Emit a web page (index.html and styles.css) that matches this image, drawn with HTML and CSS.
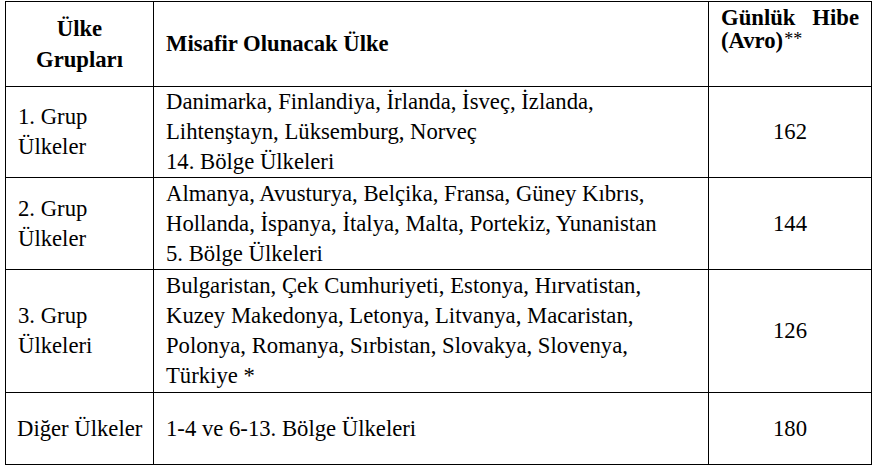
FILE: index.html
```html
<!DOCTYPE html>
<html lang="tr">
<head>
<meta charset="utf-8">
<link rel="stylesheet" href="styles.css">
</head>
<body>
<div class="page">
<table class="grant">
  <colgroup>
    <col class="c1">
    <col class="c2">
    <col class="c3">
  </colgroup>
  <tr class="r-head">
    <th class="h-group">Ülke<br>Grupları</th>
    <th class="h-country">Misafir Olunacak Ülke</th>
    <th class="h-amount"><span class="just">Günlük Hibe</span>(Avro)<span class="ast">**</span></th>
  </tr>
  <tr class="r1">
    <td class="group">1. Grup<br>Ülkeler</td>
    <td class="countries">Danimarka, Finlandiya, İrlanda, İsveç, İzlanda,<br>Lihtenştayn, Lüksemburg, Norveç<br>14. Bölge Ülkeleri</td>
    <td class="amount">162</td>
  </tr>
  <tr class="r2">
    <td class="group">2. Grup<br>Ülkeler</td>
    <td class="countries">Almanya, Avusturya, Belçika, Fransa, Güney Kıbrıs,<br>Hollanda, İspanya, İtalya, Malta, Portekiz, Yunanistan<br>5. Bölge Ülkeleri</td>
    <td class="amount">144</td>
  </tr>
  <tr class="r3">
    <td class="group">3. Grup<br>Ülkeleri</td>
    <td class="countries">Bulgaristan, Çek Cumhuriyeti, Estonya, Hırvatistan,<br>Kuzey Makedonya, Letonya, Litvanya, Macaristan,<br>Polonya, Romanya, Sırbistan, Slovakya, Slovenya,<br>Türkiye *</td>
    <td class="amount">126</td>
  </tr>
  <tr class="r4">
    <td class="group nowrap">Diğer Ülkeler</td>
    <td class="countries">1-4 ve 6-13. Bölge Ülkeleri</td>
    <td class="amount">180</td>
  </tr>
</table>
</div>
</body>
</html>
```
FILE: styles.css
```css
html, body {
  margin: 0;
  padding: 0;
  background: #fff;
}
.page {
  padding: 1px 0 0 5px;
}
.grant {
  border-collapse: collapse;
  table-layout: fixed;
  width: 866px;
  font-family: "Liberation Serif", "Times New Roman", serif;
  font-size: 22.7px;
  line-height: 30px;
  color: #000;
}
.c1 { width: 148px; }
.c2 { width: 555px; }
.c3 { width: 163px; }
.grant th, .grant td {
  border: 1px solid #000;
  padding: 0 12px;
  vertical-align: middle;
}
.grant th {
  font-weight: bold;
  text-align: left;
}
.r-head { height: 85px; }
.r1 { height: 91px; }
.r2 { height: 92px; }
.r3 { height: 123px; }
.r4 { height: 72px; }
.grant th.h-group {
  text-align: center;
  line-height: 31px;
  padding: 0 4px;
}
.grant th.h-amount {
  vertical-align: top;
  line-height: 23px;
  padding-top: 4px;
}
.just {
  display: block;
  text-align: justify;
  text-align-last: justify;
}
.ast {
  font-weight: normal;
  font-size: 18px;
  position: relative;
  top: -3px;
  margin-left: 1px;
}
.amount {
  text-align: center;
}
.grant td.nowrap {
  white-space: nowrap;
  padding: 0 6px 0 11px;
}
```
